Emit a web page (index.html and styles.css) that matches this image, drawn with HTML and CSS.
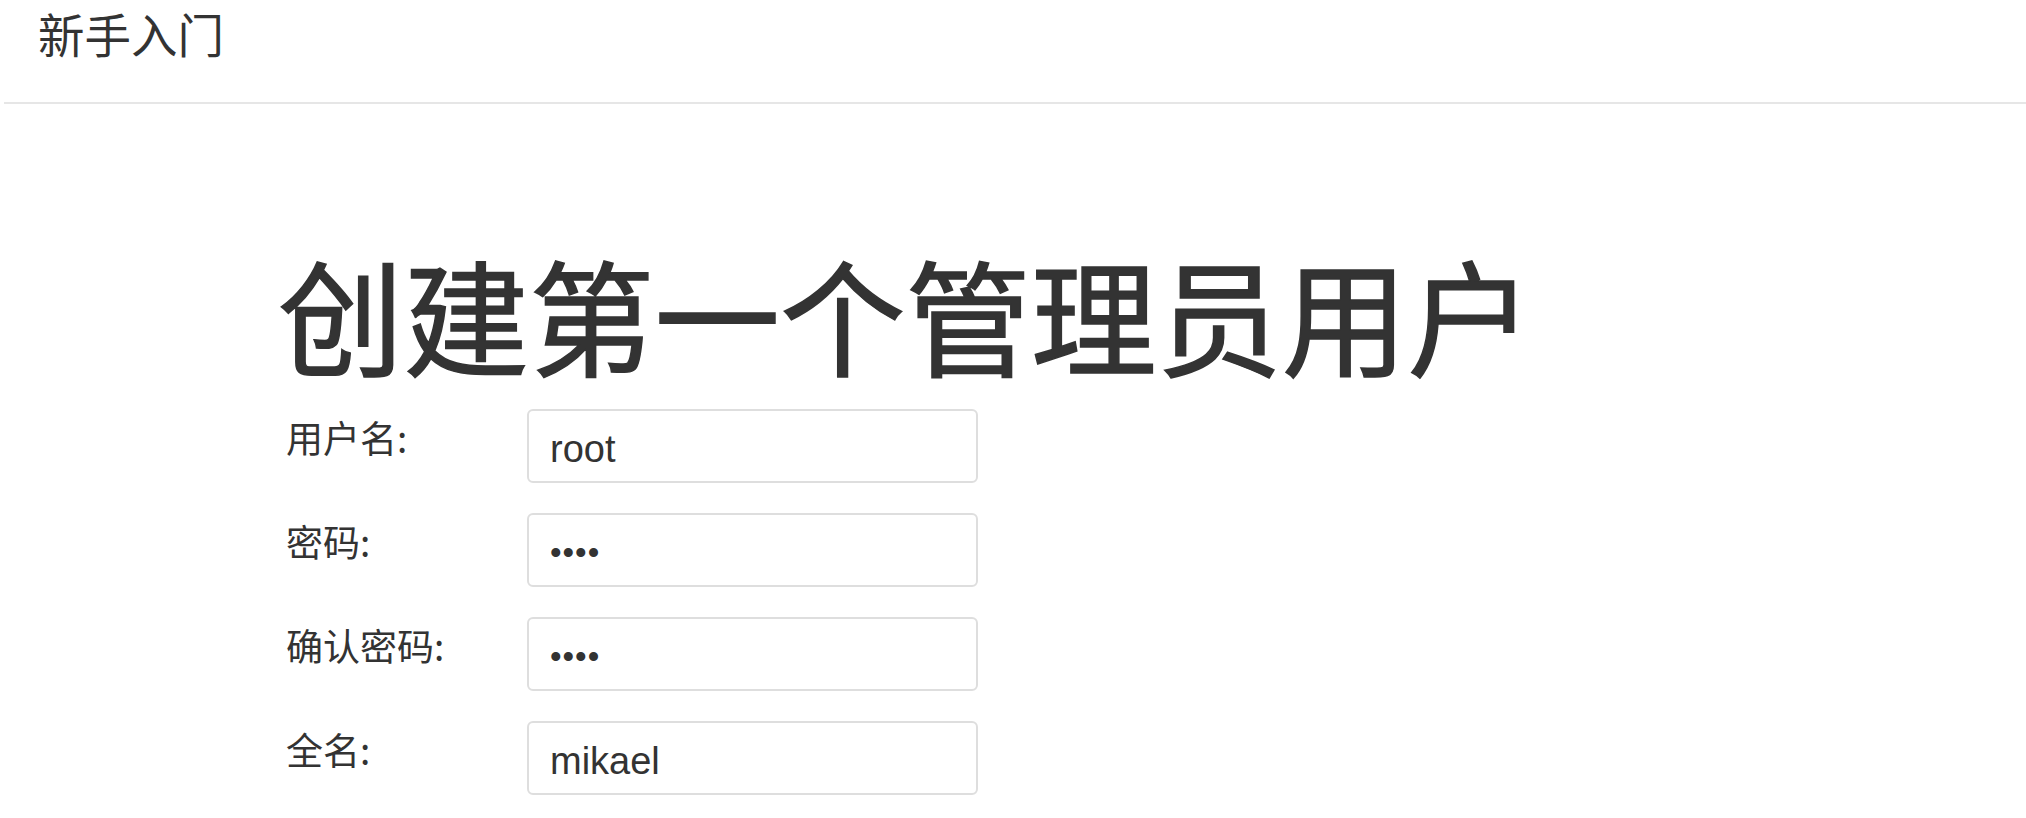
FILE: index.html
```html
<!DOCTYPE html>
<html lang="zh-CN">
<head>
    <meta charset="UTF-8">
    <meta name="viewport" content="width=device-width, initial-scale=1.0">
    <title>新手入门</title>
    <link rel="stylesheet" href="styles.css">
</head>
<body>
    <header class="topbar">
        <span class="brand">新手入门</span>
    </header>

    <main class="setup">
        <h1 class="setup-title">创建第一个管理员用户</h1>
        <form class="setup-form">
            <div class="form-row">
                <label for="username">用户名:</label>
                <input id="username" type="text" value="root">
            </div>
            <div class="form-row">
                <label for="password">密码:</label>
                <input id="password" class="secret" type="password" value="1234">
            </div>
            <div class="form-row">
                <label for="password2">确认密码:</label>
                <input id="password2" class="secret" type="password" value="1234">
            </div>
            <div class="form-row">
                <label for="fullname">全名:</label>
                <input id="fullname" type="text" value="mikael">
            </div>
        </form>
    </main>
</body>
</html>
```

FILE: styles.css
```css
body {
    margin: 0;
    font-family: "Noto Sans CJK SC", "Liberation Sans", sans-serif;
    color: #333;
    background-color: white;
}
.topbar {
    height: 104px;
    margin-left: 4px;
    padding: 10px 0 0 34px;
    box-sizing: border-box;
    border-bottom: 2px solid #e6e6e6;
}
.brand {
    display: block;
    font-size: 46.5px;
    line-height: 46px;
}
.setup {
    padding-left: 278px;
}
.setup-title {
    margin: 146px 0 35px 0;
    font-size: 125.5px;
    line-height: 124px;
    font-weight: normal;
    -webkit-text-stroke: 1.5px #333;
}
.setup-form {
    display: flex;
    flex-direction: column;
    gap: 30px;
}
.form-row {
    display: flex;
    align-items: flex-start;
}
.form-row label {
    width: 249px;
    padding: 10px 0 0 8px;
    box-sizing: border-box;
    font-size: 37px;
    line-height: 36px;
}
.form-row input {
    width: 451px;
    height: 74px;
    box-sizing: border-box;
    padding: 6px 21px 0 21px;
    border: 2px solid #dedede;
    border-radius: 6px;
    font-family: "Liberation Sans", sans-serif;
    font-size: 38px;
    color: #333;
    outline: none;
}
.form-row input.secret {
    font-size: 33px;
    letter-spacing: 1px;
}
```
